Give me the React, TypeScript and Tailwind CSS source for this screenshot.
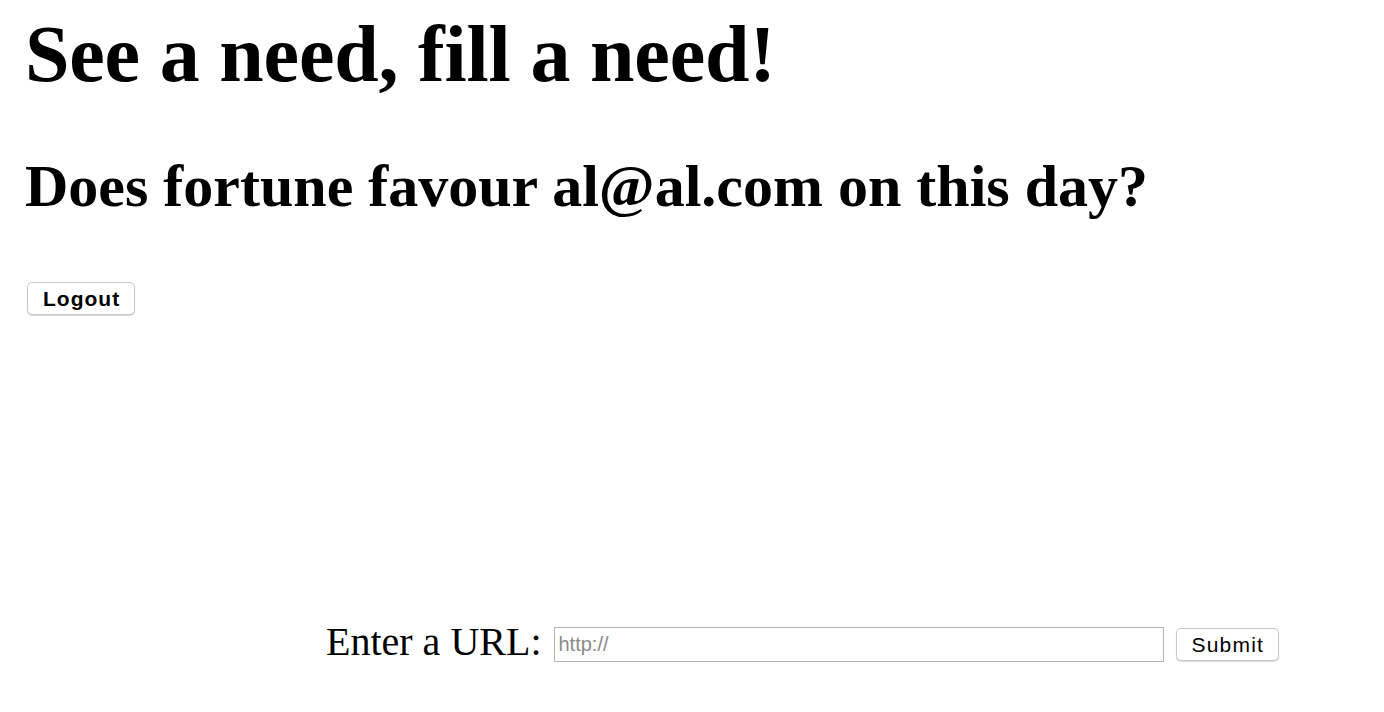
const sans = { fontFamily: '"Liberation Sans", Arial, sans-serif' };

export default function App() {
  return (
    <div className="min-h-screen bg-white text-black px-[25px]" style={{ fontFamily: '"Liberation Serif", "Times New Roman", serif' }}>
      <h1 className="text-[80px] font-bold leading-none pt-[14px] tracking-[-0.2px]">See a need, fill a need!</h1>
      <h2 className="text-[60px] font-bold leading-none mt-[62px]">Does fortune favour al@al.com on this day?</h2>
      <div className="mt-[66px]">
        <button
          className="h-[33px] pl-[15px] pr-[14px] ml-[2px] rounded-[5px] border border-[#c8c8c8] bg-white shadow-[0_1px_1px_rgba(0,0,0,0.15)] text-[21px] font-bold tracking-[1px]"
          style={sans}
        >
          Logout
        </button>
      </div>
      <div className="mt-[312px] flex items-center pl-[301px] gap-[12px]">
        <label className="text-[40px] leading-none -mt-[5px]">Enter a URL:</label>
        <input
          type="text"
          placeholder="http://"
          className="w-[610px] h-[35px] border border-[#b4b4b4] px-[4px] text-[20px] placeholder:text-[#8a8a8a] outline-none"
          style={sans}
        />
        <button
          className="h-[33px] pl-[15px] pr-[14px] rounded-[5px] border border-[#c8c8c8] bg-white shadow-[0_1px_1px_rgba(0,0,0,0.15)] text-[21px] tracking-[1.2px]"
          style={sans}
        >
          Submit
        </button>
      </div>
    </div>
  );
}
